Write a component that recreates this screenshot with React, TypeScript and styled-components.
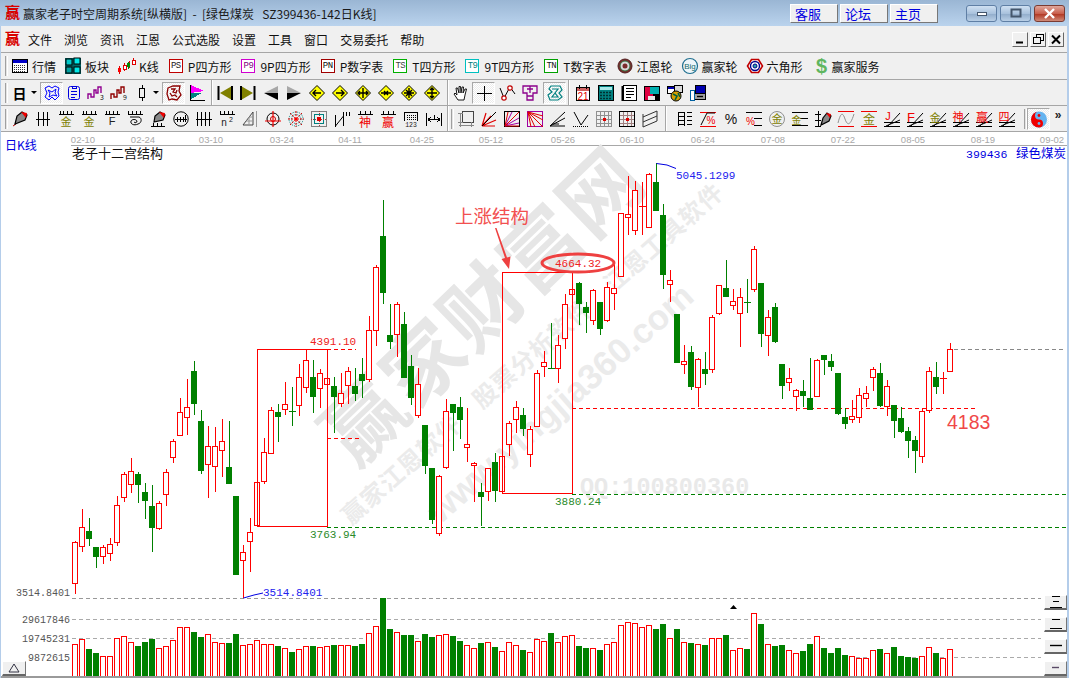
import React from 'react';
import styled, { createGlobalStyle } from 'styled-components';

const CJK = `"Noto Sans CJK SC", "Liberation Sans", sans-serif`;
const MONO = `"Liberation Mono", "Noto Sans CJK SC", monospace`;

const GlobalStyle = createGlobalStyle`
  html, body { margin: 0; padding: 0; background: #fff; overflow: hidden; }
  * { box-sizing: border-box; }
`;

const Window = styled.div`
  width: 1069px;
  height: 678px;
  display: flex;
  flex-direction: column;
  font-family: ${CJK};
  font-size: 12px;
  color: #111;
  background: #f0f0f0;
  border-left: 1px solid #b4cdea;
  border-right: 2px solid #b4cdea;
`;

const TitleBar = styled.div`
  height: 26px;
  margin: 0 -2px 0 -1px;
  padding: 0 4px 0 5px;
  display: flex;
  align-items: center;
  background: linear-gradient(#9ab6d4, #bad3ed);
  flex: none;
`;
const AppLogo = styled.span`
  width: 16px;
  font: bold 15px/16px "Liberation Serif", "Noto Sans CJK SC", serif;
  color: #d80000;
  margin-right: 2px;
`;
const TitleText = styled.span`
  flex: 1;
  white-space: pre;
  color: #1a1a1a;
`;
const LinkButton = styled.div`
  width: 48px;
  height: 19px;
  margin-right: 2px;
  padding-left: 4px;
  background: #f0f0f0;
  border: 1px solid;
  border-color: #fff #777 #777 #fff;
  color: #0000e0;
  font-size: 13px;
  line-height: 17px;
`;
const CaptionGroup = styled.div`
  display: flex;
  gap: 3px;
  margin-left: 26px;
`;
const CaptionButton = styled.div<{ $close?: boolean }>`
  width: 31px;
  height: 17px;
  border: 1px solid ${p => (p.$close ? '#7a3b32' : '#5f7fa5')};
  border-radius: 3px;
  background: ${p =>
    p.$close
      ? 'linear-gradient(#e0a79c, #c8604e 50%, #b23a26 55%, #d08a78)'
      : 'linear-gradient(#cfe0f2, #a9c2dd 50%, #93aecc 55%, #b9cfe6)'};
  display: flex;
  align-items: center;
  justify-content: center;
`;

const MenuBar = styled.div`
  height: 27px;
  padding-left: 4px;
  display: flex;
  align-items: center;
  flex: none;
  border-bottom: 1px solid #a6a6a6;
`;
const MenuLogo = styled(AppLogo)`
  margin-right: 2px;
  width: 15px;
`;
const MenuItem = styled.span`
  padding: 0 6px;
  color: #111;
`;
const MdiGroup = styled.div`
  margin-left: auto;
  margin-right: 3px;
  display: flex;
  gap: 2px;
`;
const MdiButton = styled.div`
  width: 16px;
  height: 15px;
  background: #f0f0f0;
  border: 1px solid;
  border-color: #fff #666 #666 #fff;
  display: flex;
  align-items: center;
  justify-content: center;
`;

const Toolbar = styled.div<{ $h: number }>`
  height: ${p => p.$h}px;
  flex: none;
  display: flex;
  align-items: center;
  padding-left: 4px;
  overflow: hidden;
  border-bottom: 1px solid #a6a6a6;
`;
const Grip = styled.div`
  width: 3px;
  height: 20px;
  flex: none;
  border-left: 1px solid #a0a0a0;
  border-right: 1px solid #fff;
  background: #e4e4e4;
`;
const Divider = styled.div`
  width: 2px;
  align-self: stretch;
  flex: none;
  border-left: 1px solid #a6a6a6;
  border-right: 1px solid #fff;
`;
const Gap = styled.div<{ $w: number }>`
  width: ${p => p.$w}px;
  flex: none;
`;
const Tool = styled.div<{ $w?: number; $active?: boolean }>`
  width: ${p => p.$w ?? 23}px;
  height: 22px;
  flex: none;
  display: flex;
  align-items: center;
  justify-content: center;
  ${p =>
    p.$active
      ? `background: repeating-conic-gradient(#fff 0 25%, #ececec 0 50%) 0 0 / 2px 2px;
         border: 1px solid; border-color: #a8a8a8 #fff #fff #a8a8a8;`
      : ''}
`;
const Caret = styled.div`
  width: 0;
  height: 0;
  border-left: 3px solid transparent;
  border-right: 3px solid transparent;
  border-top: 3px solid #000;
`;
const DayMark = styled.span`
  font-size: 14px;
  font-weight: 700;
  color: #000;
`;
const More = styled.span`
  font: bold 12px/10px "Liberation Sans", sans-serif;
  color: #222;
  margin-bottom: 8px;
`;

const Item = styled.div<{ $gap?: number; $end?: number }>`
  display: flex;
  align-items: center;
  gap: ${p => p.$gap ?? 4}px;
  margin-right: ${p => p.$end ?? 9}px;
  white-space: nowrap;
`;
const LetterBox = styled.div<{ $border: string; $ink: string }>`
  width: 14px;
  height: 14px;
  border: 1px solid ${p => p.$border};
  color: ${p => p.$ink};
  background: #fff;
  font: 9px/12px ${MONO};
  text-align: center;
  letter-spacing: -0.6px;
`;

const ChartPane = styled.div`
  position: relative;
  flex: 1;
  background: #fff;
  border-bottom: 2px solid #9a9a9a;
`;
const ChartSvg = styled.svg`
  display: block;
  width: 1066px;
  height: 544px;
`;
const ChartText = styled.text<{ $c: string; $s?: number; $f?: string; $b?: boolean }>`
  fill: ${p => p.$c};
  font-size: ${p => p.$s ?? 11}px;
  font-family: ${p => p.$f ?? MONO};
  font-weight: ${p => (p.$b ? 700 : 400)};
`;
const SideButtons = styled.div`
  position: absolute;
  right: 0;
  bottom: 0;
  display: flex;
  flex-direction: column;
  gap: 7px;
`;
const BevelButton = styled.div`
  width: 23px;
  height: 15px;
  background: #f0f0f0;
  border: 1px solid;
  border-color: #fff #777 #666 #fff;
  border-bottom-width: 2px;
  display: flex;
  align-items: center;
  justify-content: center;
`;
const ToggleButton = styled(BevelButton)`
  position: absolute;
  left: 1px;
  bottom: 0;
  width: 24px;
`;

const Icon = styled.svg`
  display: block;
  overflow: visible;
  fill: none;
  stroke: #000;
  stroke-width: 1;
  flex: none;
`;
const IconText = styled.text<{ $c: string; $s?: number; $f?: string }>`
  fill: ${p => p.$c};
  stroke: none;
  font-size: ${p => p.$s ?? 10}px;
  font-family: ${p => p.$f ?? CJK};
  text-anchor: middle;
`;

const Ticks = ({ xs = [3, 6, 9, 12] }: { xs?: number[] }) => (
  <path shapeRendering="crispEdges" d={`M0.5 3.5H15.5 ${xs.map(x => `M${x}.5 0V3`).join(' ')}`} />
);
const Fan = () => (
  <path d="M0 15.5H16M0 11.5H16M2 15L16 9M4 15L16 2" />
);
const Diamond = ({ d }: { d: string }) => (
  <>
    <path fill="#ffff00" d="M8 0.5L15.5 8L8 15.5L0.5 8Z" />
    <path strokeWidth="1.4" d={d} />
  </>
);

const icons: Record<string, React.ReactNode> = {
  table: (
    <>
      <rect x="0.5" y="1.5" width="15" height="13" fill="#fff" />
      <rect x="1" y="2" width="14" height="3" fill="#0000c8" stroke="none" />
      <path stroke="#333" strokeDasharray="1 1" shapeRendering="crispEdges" d="M2 7.5H14M2 9.5H14M2 11.5H14M2 13.5H14" />
    </>
  ),
  blocks: (
    <>
      <rect x="0" y="0" width="16" height="16" fill="#006666" stroke="none" />
      <rect x="1" y="1" width="6" height="6" fill="#00c8c8" stroke="#000" />
      <rect x="9" y="0" width="6" height="6" fill="#00e8e8" stroke="#000" />
      <rect x="1" y="9" width="6" height="6" fill="#00a0a0" stroke="#000" />
      <rect x="9" y="9" width="6" height="6" fill="#00e8e8" stroke="#000" />
    </>
  ),
  candles: (
    <g shapeRendering="crispEdges">
      <path stroke="#e00000" d="M1.5 8V16M6.5 5V13M11.5 3V10M15.5 0V7" />
      <rect x="0" y="10" width="3" height="4" fill="#f00" stroke="none" />
      <rect x="5" y="7" width="3" height="4" fill="#fff" stroke="#e00000" />
      <path stroke="#008000" d="M10.5 4V11" />
      <rect x="9" y="5" width="3" height="4" fill="#080" stroke="none" />
      <rect x="14" y="2" width="3" height="4" fill="#fff" stroke="#e00000" />
    </g>
  ),
  gannWheel: (
    <>
      <circle cx="8" cy="8" r="7" fill="#7a2a2a" stroke="#502020" />
      <circle cx="8" cy="8" r="5" fill="#d8d8d8" stroke="#2e6e3e" />
      <circle cx="8" cy="8" r="2.5" fill="#7a2a2a" stroke="none" />
    </>
  ),
  bigWheel: (
    <>
      <circle cx="8" cy="8" r="7.5" fill="#eef6fa" stroke="#1f6f8f" strokeWidth="1.2" />
      <IconText $c="#126a6a" $s={8} x="8" y="11" $f="Liberation Sans">Big</IconText>
    </>
  ),
  hexWheel: (
    <>
      <path fill="#fff" stroke="#c00000" strokeWidth="1.6" d="M4.5 1.5H11.5L15.5 8L11.5 14.5H4.5L0.5 8Z" />
      <circle cx="8" cy="8" r="4.5" fill="#fff" stroke="#00008c" strokeWidth="1.4" />
      <circle cx="8" cy="8" r="2" fill="#2ca8a8" stroke="#00008c" />
    </>
  ),
  wave: (
    <path stroke="#0000ff" d="M1 3L5 1L8 3L11 1L15 3L14 7L15 11L11 15L8 12L5 15L1 12L3 8ZM4 5L8 7L12 4L11 8L13 11L9 10L5 12L6 8Z" />
  ),
  notes: (
    <>
      <rect x="2.5" y="1.5" width="11" height="13" rx="2" stroke="#0000e0" />
      <path stroke="#0000e0" d="M6 1V3H10V1M5 6.5H11M5 9.5H11M5 12H9" shapeRendering="crispEdges" />
    </>
  ),
  wave3: (
    <>
      <path stroke="#900090" strokeWidth="1.4" d="M0 14V9H3V12H6V5H8V8H10V2H13V8" />
      <IconText $c="#111" $s={7} x="14" y="15">3</IconText>
    </>
  ),
  wave9: (
    <>
      <path stroke="#900000" strokeWidth="1.4" d="M0 14V9H3V12H6V5H8V8H10V2H13V8" />
      <IconText $c="#111" $s={7} x="14" y="15">9</IconText>
    </>
  ),
  candle: <path shapeRendering="crispEdges" d="M8.5 0V3M8.5 13V16M5.5 3.5H10.5V12.5H5.5Z" />,
  maze: (
    <path stroke="#8c0000" strokeWidth="1.3" d="M2 3L7 1L14 1L13 6L15 10L11 15L6 14L3 15L1 9ZM5 4L9 4L7 7L10 8L11 5M4 8L6 11L9 10L11 12" />
  ),
  flags: (
    <g shapeRendering="crispEdges">
      <path fill="#ff00ff" stroke="none" d="M2 0L15 6L2 8Z" />
      <path fill="#008080" stroke="none" d="M2 8L13 8L2 14Z" />
      <path stroke="#000" d="M1.5 0V15.5H16" />
    </g>
  ),
  first: (
    <>
      <path fill="#808000" stroke="none" d="M15 1V15L3 8Z" />
      <path strokeWidth="2" d="M1.5 1V15M15 1V15" />
    </>
  ),
  last: (
    <>
      <path fill="#808000" stroke="none" d="M1 1V15L13 8Z" />
      <path strokeWidth="2" d="M14.5 1V15M1 1V15" />
    </>
  ),
  prev: (
    <>
      <path fill="#a8a8a8" stroke="none" d="M15 1L15 8L1 8Z" />
      <path fill="#000" stroke="none" d="M15 15L15 8L1 8Z" />
    </>
  ),
  next: (
    <>
      <path fill="#a8a8a8" stroke="none" d="M1 1L1 8L15 8Z" />
      <path fill="#000" stroke="none" d="M1 15L1 8L15 8Z" />
    </>
  ),
  d1: <Diamond d="M12 8H4M7 5L4 8L7 11" />,
  d2: <Diamond d="M4 8H12M9 5L12 8L9 11" />,
  d3: <Diamond d="M3 8H13M5 6L3 8L5 10M11 6L13 8L11 10M8 3V13" />,
  d4: <Diamond d="M3 8H13M6 6L8 8L6 10M10 6L8 8L10 10" />,
  d5: <Diamond d="M3 8H13M8 3V13M5 5L11 11M11 5L5 11" />,
  d6: <Diamond d="M3 8H13M8 3V13M6 5L8 3L10 5M6 11L8 13L10 11" />,
  hand: (
    <path fill="#fff" strokeWidth="0.9" d="M5 15L1 9L2 8L4 10L3 3L4.5 3L6 8L6 1.5H7.5L8 8L9 2H10.5L10 8L12 4H13.5L12 10L11 15Z" />
  ),
  cross: <path shapeRendering="crispEdges" d="M8.5 1V16M1 8.5H16" />,
  vline: (
    <>
      <path d="M1 3L5 13L11 2L16 9" />
      <circle cx="5" cy="13" r="2.2" fill="#fff" stroke="#c00000" strokeWidth="1.2" />
      <circle cx="11" cy="3" r="2.2" fill="#fff" stroke="#c00000" strokeWidth="1.2" />
    </>
  ),
  purple: (
    <path stroke="#8c008c" strokeWidth="1.3" d="M1 1H15V8H11V15H5V8H1ZM5 4H11M8 1V8M5 11H11" />
  ),
  brain: (
    <path stroke="#008080" strokeWidth="1.2" d="M4 1H13L15 5L12 8L15 12L11 15H3L1 10L5 7L2 4ZM5 4L11 4L8 8L11 12H5L8 8" />
  ),
  calendar: (
    <>
      <rect x="1.5" y="2.5" width="13" height="13" fill="#fff" />
      <rect x="2" y="3" width="12" height="3" fill="#d06060" stroke="none" />
      <path d="M4.5 0V4M11.5 0V4" />
      <IconText $c="#e00000" $s={10} x="8" y="14.5" $f="Liberation Sans">21</IconText>
    </>
  ),
  calculator: (
    <>
      <rect x="0.5" y="0.5" width="15" height="15" fill="#008080" />
      <rect x="2" y="2" width="12" height="3" fill="#a8e8e8" stroke="none" />
      <path stroke="#003030" strokeWidth="1.6" strokeDasharray="2 1" d="M2 7.5H14M2 10.5H14M2 13.5H14" />
    </>
  ),
  ledger: (
    <>
      <rect x="2.5" y="0.5" width="13" height="15" fill="#fff" />
      <path d="M5 3.5H13M5 6.5H13M5 9.5H13M5 12.5H10" shapeRendering="crispEdges" />
      <path strokeWidth="2" d="M1.5 1V16" />
    </>
  ),
  floppy: (
    <>
      <path fill="#000" stroke="none" d="M0 1H16V16H0Z" />
      <rect x="1" y="2" width="8" height="13" fill="#e00040" stroke="none" />
      <path fill="#00b0b0" stroke="none" d="M6 2H15V9H6Z" />
      <rect x="4" y="11" width="7" height="4" fill="#e8e8e8" stroke="none" />
    </>
  ),
  globe: (
    <>
      <rect x="0.5" y="1.5" width="9" height="7" fill="#fff" />
      <rect x="1" y="2" width="8" height="2" fill="#0000b0" stroke="none" />
      <rect x="7.5" y="0.5" width="8" height="7" fill="#d8d8d8" />
      <circle cx="9" cy="11" r="5" fill="#d8a000" />
      <path stroke="#006040" strokeWidth="1.6" d="M6 9L10 11L8 15M11 8L13 12" />
    </>
  ),
  printer: (
    <>
      <rect x="5.5" y="0.5" width="10" height="8" fill="#0000b0" />
      <rect x="1.5" y="8.5" width="14" height="6" fill="#a0a0a0" />
      <rect x="0.5" y="5.5" width="4" height="10" fill="#fff" stroke="#0060a0" />
      <path strokeWidth="1.4" d="M7 11.5H13" />
    </>
  ),
  pencil: (
    <>
      <path stroke="#c00000" d="M1 15L4 13" />
      <path fill="#888" strokeWidth="1.2" d="M3 13L5 5L10 1L15 4L13 9Z" />
      <path fill="#f00000" stroke="none" d="M9 1L15 2L14 7Z" />
    </>
  ),
  hash3: <path shapeRendering="crispEdges" d="M3.5 1V15M8.5 1V15M12.5 1V15M1 8.5H15" />,
  jin1: (
    <>
      <Ticks xs={[2, 5, 9, 13]} />
      <IconText $c="#808000" $s={11} x="8" y="15">金</IconText>
    </>
  ),
  jin2: (
    <>
      <Ticks xs={[2, 5, 10, 14]} />
      <IconText $c="#808000" $s={11} x="8" y="15">金</IconText>
    </>
  ),
  fTicks: (
    <>
      <Ticks xs={[2, 5, 9, 13]} />
      <IconText $c="#222" $s={11} x="8" y="14" $f="Liberation Sans">F</IconText>
    </>
  ),
  spiral: (
    <>
      <Ticks xs={[1, 5, 9, 13]} />
      <path d="M3 6H12C15 7 15 12 11 13C7 15 3 13 4 10C5 8 9 8 10 10C10 12 8 12 7 11" />
    </>
  ),
  pencilRule: (
    <>
      <path shapeRendering="crispEdges" d="M1 15.5H15M3.5 12V16M7.5 12V16M11.5 12V16" />
      <path fill="#888" strokeWidth="1.2" d="M4 11L5 5L10 1L15 4L13 9Z" />
      <path fill="#f00000" stroke="none" d="M9 1L15 2L14 7Z" />
    </>
  ),
  circleRule: (
    <>
      <circle cx="8" cy="8" r="7.2" />
      <path shapeRendering="crispEdges" d="M2 8.5H14M4.5 6V11M7.5 6V11M10.5 6V11M12.5 4V11" />
    </>
  ),
  hash4: <path shapeRendering="crispEdges" d="M1.5 1V15M5.5 1V15M9.5 1V15M13.5 1V15M0 8.5H16" />,
  n2: (
    <>
      <Ticks xs={[1, 5, 9, 13]} />
      <IconText $c="#222" $s={10} x="5" y="15" $f="Liberation Sans">n</IconText>
      <IconText $c="#222" $s={7} x="12" y="11" $f="Liberation Sans">2</IconText>
    </>
  ),
  triangle: (
    <>
      <path d="M1 14L11 1V14Z" stroke="#444" />
      <path stroke="#999" d="M14.5 0V16M4 10H11M7 6H11M7 6V14" />
    </>
  ),
  target: (
    <>
      <circle cx="8" cy="8" r="6" />
      <circle cx="8" cy="8" r="2.5" stroke="#c00000" />
      <path stroke="#f00000" strokeWidth="1.2" d="M8 0V16M0 10H16" />
    </>
  ),
  web: (
    <>
      <circle cx="8" cy="8" r="7" stroke="#008080" strokeDasharray="1 1" />
      <circle cx="8" cy="8" r="4.5" stroke="#008080" strokeDasharray="1 1" />
      <path stroke="#e00000" strokeDasharray="2 1" d="M0 8H16M8 0V16M2 2L14 14M14 2L2 14" />
      <circle cx="8" cy="8" r="1.6" fill="#f00" stroke="none" />
    </>
  ),
  webSquare: (
    <g shapeRendering="crispEdges">
      <rect x="0.5" y="0.5" width="15" height="15" stroke="#808080" />
      <rect x="3.5" y="3.5" width="9" height="9" stroke="#008080" />
      <path stroke="#a04040" strokeDasharray="1 1" d="M0 8.5H16M8.5 0V16" />
      <rect x="6" y="6" width="4" height="4" fill="#e00000" stroke="none" />
    </g>
  ),
  nQuote: <path d="M1.5 4V16M1.5 15L9.5 5M9.5 1V15M12.5 1V5M15.5 1V5" />,
  shen: (
    <>
      <Ticks xs={[3, 8, 13]} />
      <IconText $c="#f00000" $s={12} x="8" y="15.5">神</IconText>
    </>
  ),
  ying: (
    <>
      <Ticks xs={[3, 8, 13]} />
      <IconText $c="#f00000" $s={12} x="8" y="15.5">赢</IconText>
    </>
  ),
  ruler: (
    <>
      <path shapeRendering="crispEdges" d="M1.5 1V10M1 1.5H15M14.5 1V10" />
      <path shapeRendering="crispEdges" strokeDasharray="1 1" d="M4 4.5H13M4 6.5H13M4 8.5H13" />
      <IconText $c="#222" $s={6.5} x="8" y="15.5" $f="Liberation Mono">123</IconText>
    </>
  ),
  measure: <path shapeRendering="crispEdges" d="M0.5 2V15M15.5 2V15M2 8.5H14M2 8.5L5 6M2 8.5L5 11M14 8.5L11 6M14 8.5L11 11M8.5 4V9" />,
  squareLegs: (
    <g shapeRendering="crispEdges" stroke="#444">
      <rect x="4.5" y="0.5" width="11" height="11" strokeWidth="1" />
      <path stroke="#888" d="M0 2.5H5M0 11.5H5M2.5 2V16M1 14.5H16M13.5 11V16" />
    </g>
  ),
  fanRed: (
    <>
      <path stroke="#e00000" strokeWidth="1.2" d="M1 15L5 2M1 15L10 5M1 15L15 9M1 15H14" />
      <path d="M1 15L15 1" />
    </>
  ),
  squareFan: (
    <>
      <rect x="0.5" y="0.5" width="15" height="15" />
      <path stroke="#a000a0" d="M1 15L8 1M1 15L15 7M1 15L15 12" />
      <path stroke="#e00000" d="M1 15L4 1M1 15L15 1M1 15L15 15" />
    </>
  ),
  squareFan2: (
    <>
      <rect x="0.5" y="0.5" width="15" height="15" stroke="#a000a0" />
      <path stroke="#e00000" d="M1 1L4 16M1 1L8 16M1 1L16 9M1 1L16 5M1 1L16 16" />
    </>
  ),
  fanBlack: <path d="M0 15L15 1M0 15L15 7M0 15H15M3 13L9 13" />,
  vDots: (
    <>
      <path d="M1 1L8 14L15 4" />
      <path strokeDasharray="1 1" d="M0 15.5H16" />
    </>
  ),
  gridRed: (
    <g shapeRendering="crispEdges">
      <path stroke="#909090" d="M0.5 0V16M4.5 0V16M8.5 0V16M12.5 0V16M15.5 0V16M0 0.5H16M0 4.5H16M0 8.5H16M0 12.5H16M0 15.5H16" />
      <rect x="7" y="7" width="3" height="3" fill="#e00000" stroke="none" />
    </g>
  ),
  gridFrame: (
    <g shapeRendering="crispEdges">
      <path stroke="#a08080" d="M4.5 0V16M8.5 0V16M12.5 0V16M0 4.5H16M0 8.5H16M0 12.5H16" />
      <path d="M0.5 0V16M15.5 0V16M0 0.5H16M0 15.5H16" />
      <rect x="7" y="7" width="3" height="3" fill="#e00000" stroke="none" />
    </g>
  ),
  parallel: <path d="M1 6L15 0M1 11L15 5M1 16L15 10M1 3V16M15 0V10" stroke="#333" />,
  gridList: <path shapeRendering="crispEdges" d="M1.5 1V15M1 1.5H8M1 5.5H8M1 9.5H8M1 13.5H8M7.5 1V15M10 1.5H15M10 5.5H15M10 9.5H15M10 13.5H15" />,
  percentLine: (
    <>
      <path stroke="#f00000" shapeRendering="crispEdges" strokeWidth="1.2" d="M0 1.5H16M0 15.5H16" />
      <path d="M1 14L7 2H15" />
      <IconText $c="#f00000" $s={10} x="11" y="13" $f="Liberation Sans">%</IconText>
    </>
  ),
  percent: <IconText $c="#111" $s={14} x="8" y="13" $f="Liberation Sans">%</IconText>,
  percentEq: (
    <>
      <path shapeRendering="crispEdges" d="M0 1.5H16M8 7.5H16M8 14.5H16" />
      <IconText $c="#f00000" $s={10} x="4.5" y="14" $f="Liberation Sans">%</IconText>
    </>
  ),
  jinCircle: (
    <>
      <circle cx="8" cy="8" r="7.5" stroke="#909090" />
      <IconText $c="#808000" $s={11} x="8" y="12">金</IconText>
    </>
  ),
  jinEq: (
    <>
      <path shapeRendering="crispEdges" d="M0 1.5H16M8 7.5H16M8 14.5H16M0 14.5H8" />
      <IconText $c="#808000" $s={10} x="4.5" y="13">金</IconText>
    </>
  ),
  gannPencil: (
    <>
      <path shapeRendering="crispEdges" d="M3.5 0V16M0 3.5H6M0 9.5H6M0 15.5H6" />
      <path fill="#888" strokeWidth="1.2" d="M6 14L8 7L12 2L16 5L14 10Z" />
      <path fill="#f00000" stroke="none" d="M11 2L16 3L15 7Z" />
    </>
  ),
  waveRed: (
    <>
      <path stroke="#f00000" shapeRendering="crispEdges" d="M0 0.5H16M0 15.5H16" />
      <path stroke="#909090" d="M0 12C3 0 5 2 7 8S12 16 16 3" />
    </>
  ),
  jinRed: (
    <>
      <path stroke="#f00000" shapeRendering="crispEdges" d="M0 0.5H16M0 15.5H16" />
      <IconText $c="#808000" $s={12} x="8" y="13">金</IconText>
    </>
  ),
  fanJ: <><IconText $c="#f00000" $s={11} x="4" y="9" $f="Liberation Sans">J</IconText><Fan /></>,
  fanF: <><IconText $c="#f00000" $s={13} x="4" y="11" $f="Liberation Sans">F</IconText><Fan /></>,
  fanJin: <><Fan /><IconText $c="#808000" $s={11} x="5" y="11">金</IconText></>,
  fanShen: <><Fan /><IconText $c="#f00000" $s={11} x="5" y="10">神</IconText></>,
  fanYing: <><Fan /><IconText $c="#f00000" $s={12} x="6" y="11">赢</IconText></>,
  fanSi: <><Fan /><IconText $c="#f00000" $s={11} x="5" y="10">四</IconText></>,
  yinyang: (
    <>
      <circle cx="8" cy="8.5" r="8" fill="#66b4f0" stroke="none" />
      <path fill="#f00000" stroke="none" d="M8 0.5A8 8 0 0 0 8 16.5A4 4 0 0 0 8 8.5A4 4 0 0 1 8 0.5Z" />
      <circle cx="8" cy="4.5" r="1.4" fill="#f00000" stroke="none" />
      <circle cx="8" cy="12.5" r="1.4" fill="#66b4f0" stroke="none" />
    </>
  ),
};

const Glyph = ({ name }: { name: string }) => (
  <Icon width="16" height="16" viewBox="0 0 16 16">{icons[name]}</Icon>
);

const menus = ['文件', '浏览', '资讯', '江恩', '公式选股', '设置', '工具', '窗口', '交易委托', '帮助'];

const boxItems = [
  { code: 'PS', label: 'P四方形', border: '#c00000', ink: '#222' },
  { code: 'P9', label: '9P四方形', border: '#d000d0', ink: '#800080' },
  { code: 'PN', label: 'P数字表', border: '#a00000', ink: '#111' },
  { code: 'TS', label: 'T四方形', border: '#00b000', ink: '#444' },
  { code: 'T9', label: '9T四方形', border: '#00c0c0', ink: '#008080' },
  { code: 'TN', label: 'T数字表', border: '#00a000', ink: '#222' },
];

const navTools = ['first', 'last', 'prev', 'next', 'd1', 'd2', 'd3', 'd4', 'd5', 'd6'];
const drawToolsA = [
  'pencil', 'hash3', 'jin1', 'jin2', 'fTicks', 'spiral', 'pencilRule', 'circleRule', 'hash4', 'n2',
  'triangle', 'target', 'web', 'webSquare', 'nQuote', 'shen', 'ying', 'ruler', 'measure',
];
const drawToolsB = ['squareLegs', 'fanRed', 'squareFan', 'squareFan2', 'fanBlack', 'vDots', 'gridRed', 'gridFrame', 'parallel'];
const drawToolsC = [
  'gridList', 'percentLine', 'percent', 'percentEq', 'jinCircle', 'jinEq', 'gannPencil', 'waveRed', 'jinRed',
  'fanJ', 'fanF', 'fanJin', 'fanShen', 'fanYing', 'fanSi',
];
const officeTools = ['calendar', 'calculator', 'ledger', 'floppy', 'globe', 'printer'];

const dates: [string, number][] = [
  ['02-10', 83], ['02-24', 143], ['03-10', 211], ['03-24', 282], ['04-11', 350], ['04-25', 422], ['05-12', 491],
  ['05-26', 563], ['06-10', 632], ['06-24', 703], ['07-08', 773], ['07-22', 843], ['08-05', 913], ['08-19', 983], ['09-02', 1052],
];

// body top, body bottom, wick top, wick bottom, colour, volume bar top
type Bar = [number, number, number, number, 'r' | 'g', number];
const bars: Bar[] = [
  [542, 584, 541, 594, 'r', 644], [527, 547, 509, 552, 'r', 639], [531, 539, 518, 546, 'g', 649], [547, 557, 547, 568, 'g', 653],
  [547, 557, 545, 564, 'r', 656], [544, 554, 538, 561, 'r', 656], [505, 543, 496, 546, 'r', 638], [474, 498, 472, 502, 'r', 636],
  [471, 485, 458, 493, 'r', 642], [474, 485, 472, 503, 'g', 646], [492, 501, 483, 519, 'g', 642], [506, 528, 485, 552, 'g', 639],
  [503, 529, 501, 530, 'r', 648], [472, 495, 469, 506, 'r', 646], [441, 458, 439, 463, 'r', 640], [412, 436, 398, 436, 'r', 627],
  [407, 418, 379, 435, 'r', 627], [371, 404, 361, 415, 'g', 632], [421, 471, 410, 474, 'g', 637], [446, 465, 426, 498, 'r', 634],
  [446, 467, 427, 492, 'r', 642], [441, 451, 419, 477, 'r', 643], [467, 484, 421, 484, 'g', 643], [496, 575, 496, 575, 'g', 634],
  [552, 561, 545, 598, 'r', 645], [532, 542, 518, 572, 'r', 644], [482, 526, 482, 526, 'r', 640], [452, 482, 438, 484, 'r', 644],
  [410, 454, 407, 454, 'r', 644], [412, 417, 404, 442, 'g', 646], [404, 410, 382, 415, 'r', 648], [411, 412, 387, 426, 'g', 652],
  [377, 406, 364, 416, 'r', 649], [360, 388, 349, 393, 'r', 646], [377, 397, 360, 413, 'g', 646], [373, 389, 369, 408, 'r', 647],
  [378, 385, 372, 392, 'r', 646], [386, 397, 377, 433, 'g', 645], [393, 404, 373, 407, 'r', 645], [371, 386, 367, 404, 'r', 645],
  [386, 394, 368, 401, 'g', 646], [374, 381, 358, 398, 'g', 644], [330, 380, 316, 382, 'r', 633], [267, 331, 265, 346, 'r', 626],
  [236, 293, 200, 304, 'g', 598], [335, 342, 304, 349, 'g', 629], [304, 335, 302, 357, 'r', 632], [324, 378, 312, 378, 'g', 635],
  [366, 398, 355, 405, 'g', 635], [384, 416, 368, 418, 'r', 641], [425, 466, 425, 474, 'g', 634], [468, 520, 468, 524, 'g', 637],
  [476, 534, 475, 536, 'r', 635], [411, 468, 399, 469, 'r', 634], [404, 413, 404, 451, 'g', 636], [407, 420, 397, 439, 'g', 641],
  [444, 448, 408, 462, 'r', 645], [463, 466, 462, 502, 'r', 648], [492, 497, 483, 526, 'g', 643], [468, 492, 468, 501, 'r', 642],
  [462, 491, 453, 502, 'g', 647], [456, 492, 456, 492, 'r', 651], [423, 445, 421, 456, 'r', 642], [407, 420, 401, 433, 'r', 645],
  [415, 429, 408, 436, 'g', 650], [429, 455, 426, 467, 'r', 652], [373, 427, 370, 427, 'r', 639], [362, 367, 351, 377, 'r', 641],
  [368, 369, 323, 369, 'g', 633], [345, 369, 335, 383, 'r', 642], [304, 339, 294, 349, 'r', 636], [289, 295, 272, 295, 'r', 635],
  [283, 304, 282, 325, 'g', 646], [307, 313, 302, 333, 'g', 648], [290, 321, 289, 325, 'r', 648], [302, 329, 302, 335, 'g', 650],
  [287, 321, 282, 322, 'r', 644], [288, 294, 265, 310, 'r', 642], [213, 277, 213, 277, 'r', 625], [214, 218, 176, 235, 'r', 622],
  [190, 231, 181, 235, 'r', 623], [206, 207, 182, 235, 'r', 627], [174, 228, 173, 228, 'r', 625], [182, 211, 163, 211, 'g', 629],
  [215, 275, 204, 289, 'g', 624], [280, 285, 270, 302, 'r', 638], [314, 363, 314, 363, 'g', 629], [361, 365, 345, 374, 'r', 642],
  [352, 387, 346, 390, 'g', 643], [359, 388, 358, 407, 'r', 644], [369, 374, 352, 385, 'g', 645], [317, 370, 315, 373, 'r', 638],
  [285, 314, 285, 315, 'r', 638], [288, 297, 260, 297, 'g', 635], [301, 306, 289, 310, 'r', 650], [297, 314, 288, 347, 'r', 648],
  [302, 303, 279, 313, 'g', 649], [249, 290, 246, 292, 'r', 613], [283, 334, 283, 347, 'g', 624], [317, 336, 310, 356, 'r', 644],
  [307, 342, 303, 343, 'g', 646], [364, 386, 364, 399, 'g', 645], [378, 383, 368, 391, 'r', 650], [390, 397, 389, 411, 'r', 653],
  [391, 396, 380, 407, 'g', 651], [398, 410, 358, 410, 'g', 644], [360, 397, 359, 397, 'r', 636], [355, 360, 355, 375, 'g', 648],
  [361, 367, 354, 371, 'g', 653], [373, 414, 373, 415, 'g', 648], [417, 424, 408, 429, 'g', 655], [416, 420, 400, 423, 'r', 656],
  [395, 418, 388, 423, 'r', 658], [393, 399, 386, 407, 'r', 658], [369, 378, 367, 391, 'r', 650], [373, 406, 363, 407, 'g', 649],
  [386, 407, 380, 416, 'r', 653], [405, 421, 405, 438, 'g', 647], [418, 432, 407, 433, 'g', 656], [431, 441, 427, 458, 'g', 657],
  [440, 451, 436, 473, 'g', 658], [411, 457, 408, 463, 'r', 656], [371, 411, 367, 413, 'r', 647], [377, 387, 362, 394, 'g', 653],
  [378, 379, 372, 394, 'r', 658], [349, 372, 343, 372, 'r', 649],
];

const RED = '#ff0000';
const GREEN = '#008000';

const Candle = ({ bar, x }: { bar: Bar; x: number }) => {
  const [top, bottom, wickTop, wickBottom, tone] = bar;
  const ink = tone === 'r' ? RED : GREEN;
  const flat = bottom - top <= 1;
  return (
    <>
      <rect x={x} y={wickTop} width="1" height={wickBottom - wickTop} fill={ink} />
      {flat ? (
        <rect x={x - 3} y={top} width="7" height="1" fill={ink} />
      ) : tone === 'r' ? (
        <rect x={x - 2.5} y={top + 0.5} width="5" height={bottom - top - 1} fill="#fff" stroke={ink} />
      ) : (
        <rect x={x - 3} y={top} width="6" height={bottom - top} fill={ink} />
      )}
    </>
  );
};

const VolumeBar = ({ bar, x }: { bar: Bar; x: number }) =>
  bar[4] === 'r' ? (
    <rect x={x - 2.5} y={bar[5] + 0.5} width="5" height={676 - bar[5]} fill="#fff" stroke={RED} />
  ) : (
    <rect x={x - 3} y={bar[5]} width="6" height={676 - bar[5]} fill={GREEN} />
  );

const DashLine = ({ x1, x2, y, c }: { x1: number; x2: number; y: number; c: string }) => (
  <line x1={x1} x2={x2} y1={y} y2={y} stroke={c} strokeDasharray="4 3" shapeRendering="crispEdges" />
);

const Chart = () => (
  <ChartSvg viewBox="1 132 1066 544">
    <path d="M71 145.5H1067" stroke="#a8a8a8" shapeRendering="crispEdges" />
    {dates.map(([label, x]) => (
      <ChartText key={label} $c="#a8a8a8" $s={9.5} $f="Liberation Sans" x={x} y={143} textAnchor="middle">{label}</ChartText>
    ))}
    <ChartText $c="#0000e0" $s={12} $f={CJK} x={5} y={149.5}>日K线</ChartText>
    <ChartText $c="#111" $s={13} $f={CJK} x={72} y={158}>老子十二宫结构</ChartText>
    <ChartText $c="#0000e0" $s={11.5} x={966} y={158}>399436</ChartText>
    <ChartText $c="#0000e0" $s={12.5} $f={CJK} x={1016} y={158}>绿色煤炭</ChartText>

    <ChartText $c="#e6e6e6" $s={80} $b $f={CJK} dominantBaseline="central" letterSpacing="2" transform="translate(360,416) rotate(-44)" x={-40} y={0}>赢家财富网</ChartText>
    <ChartText $c="#ebebeb" $s={24} $b $f={CJK} dominantBaseline="central" letterSpacing="1" transform="translate(353,510) rotate(-41.5)" x={-12} y={0}>赢家江恩软件　股票分析软件　江恩工具软件</ChartText>
    <ChartText $c="#ebebeb" $s={35} $b $f="Liberation Sans" transform="translate(440,525) rotate(-41.4)" x={0} y={0}>www.yingjia360.com</ChartText>
    <ChartText $c="#e9e9e9" $s={23.5} $b $f="Liberation Mono" x={580} y={494}>QQ:100800360</ChartText>

    <DashLine x1={72} x2={1041} y={598.5} c="#999" />
    <DashLine x1={72} x2={1041} y={619.5} c="#aaa" />
    <DashLine x1={72} x2={1041} y={638.5} c="#aaa" />
    <DashLine x1={72} x2={1041} y={657.5} c="#aaa" />
    <DashLine x1={954} x2={1066} y={349.5} c="#888" />
    <DashLine x1={327} x2={1067} y={527.5} c={GREEN} />
    <DashLine x1={572} x2={1067} y={494.5} c={GREEN} />
    <DashLine x1={572} x2={975} y={408.5} c={RED} />
    <DashLine x1={327} x2={356} y={349.5} c={RED} />
    <DashLine x1={327} x2={361} y={438.5} c={RED} />
    <DashLine x1={572} x2={592} y={272.5} c={RED} />

    {bars.map((bar, i) => (
      <Candle key={i} bar={bar} x={75 + i * 7} />
    ))}
    {bars.map((bar, i) => (
      <VolumeBar key={i} bar={bar} x={75 + i * 7} />
    ))}

    <g fill="none" stroke={RED} shapeRendering="crispEdges">
      <rect x={257.5} y={349.5} width={70} height={177} />
      <rect x={502.5} y={272} width={70} height={221.5} />
    </g>

    <ChartText $c="#ee2222" x={310} y={345}>4391.10</ChartText>
    <ChartText $c="#2a8a2a" x={310} y={538}>3763.94</ChartText>
    <ChartText $c="#2a8a2a" x={555} y={505}>3880.24</ChartText>
    <ChartText $c="#2222ee" x={676} y={179}>5045.1299</ChartText>
    <ChartText $c="#2222ee" x={263} y={596}>3514.8401</ChartText>
    <ChartText $c="#555" $s={10} x={16} y={596}>3514.8401</ChartText>
    <ChartText $c="#555" $s={10} x={22} y={623}>29617846</ChartText>
    <ChartText $c="#555" $s={10} x={22} y={642}>19745231</ChartText>
    <ChartText $c="#555" $s={10} x={28} y={661}>9872615</ChartText>

    <path d="M656.5 163.5L667 165L676 168.5" fill="none" stroke="#0000e0" />
    <path d="M243.5 598L254 595L263 593" fill="none" stroke="#0000e0" />

    <ellipse cx={578} cy={263} rx={36} ry={9} fill="none" stroke="#ee4040" strokeWidth="3" />
    <ChartText $c="#ee2222" x={555} y={267}>4664.32</ChartText>
    <ChartText $c="#f25050" $s={18.5} $f={CJK} x={455} y={223}>上涨结构</ChartText>
    <path d="M495 228L505 258L501.5 259L509 269L510.5 256.5L507 257.5L496.5 228Z" fill="#ee4040" />
    <ChartText $c="#f04848" $s={19.5} $f="Liberation Sans" x={947} y={429}>4183</ChartText>

    <path d="M730 609L733.5 605L737 609Z" fill="#000" />
  </ChartSvg>
);

const App: React.FC = () => (
  <>
    <GlobalStyle />
    <Window>
      <TitleBar>
        <AppLogo>赢</AppLogo>
        <TitleText>赢家老子时空周期系统[纵横版]  -  [绿色煤炭   SZ399436-142日K线]</TitleText>
        <LinkButton>客服</LinkButton>
        <LinkButton>论坛</LinkButton>
        <LinkButton>主页</LinkButton>
        <CaptionGroup>
          <CaptionButton>
            <Icon width="14" height="7" viewBox="0 0 14 7"><rect x="2.5" y="2.5" width="9" height="3" fill="#fff" stroke="#44566c" /></Icon>
          </CaptionButton>
          <CaptionButton>
            <Icon width="12" height="10" viewBox="0 0 12 10"><rect x="1.5" y="1.5" width="9" height="7" fill="none" stroke="#44566c" strokeWidth="2" /></Icon>
          </CaptionButton>
          <CaptionButton $close>
            <Icon width="13" height="11" viewBox="0 0 13 11"><path d="M2 1L11 10M11 1L2 10" stroke="#fff" strokeWidth="2.4" /></Icon>
          </CaptionButton>
        </CaptionGroup>
      </TitleBar>

      <MenuBar>
        <MenuLogo>赢</MenuLogo>
        {menus.map(m => (
          <MenuItem key={m}>{m}</MenuItem>
        ))}
        <MdiGroup>
          <MdiButton>
            <Icon width="10" height="9" viewBox="0 0 10 9"><path d="M1 7.5H8" strokeWidth="2" /></Icon>
          </MdiButton>
          <MdiButton>
            <Icon width="11" height="10" viewBox="0 0 11 10"><path d="M3.5 2.5V0.5H10V6H7.5M0.5 3H7.5V9.5H0.5Z" shapeRendering="crispEdges" /></Icon>
          </MdiButton>
          <MdiButton>
            <Icon width="10" height="9" viewBox="0 0 10 9"><path d="M1 0.5L9 8.5M9 0.5L1 8.5" strokeWidth="2" /></Icon>
          </MdiButton>
        </MdiGroup>
      </MenuBar>

      <Toolbar $h={27}>
        <Grip />
        <Gap $w={4} />
        <Item><Glyph name="table" />行情</Item>
        <Item><Glyph name="blocks" />板块</Item>
        <Item $end={10} $gap={5}><Glyph name="candles" />K线</Item>
        {boxItems.map(b => (
          <Item key={b.code} $gap={5} $end={10}>
            <LetterBox $border={b.border} $ink={b.ink}>{b.code}</LetterBox>
            {b.label}
          </Item>
        ))}
        <Item><Glyph name="gannWheel" />江恩轮</Item>
        <Item><Glyph name="bigWheel" />赢家轮</Item>
        <Item $end={12}><Glyph name="hexWheel" />六角形</Item>
        <Item>
          <Icon width="13" height="18" viewBox="0 0 13 18">
            <IconText $c="#5fb65f" $s={20} x="6.5" y="16" $f="Liberation Sans" fontWeight="700">$</IconText>
          </Icon>
          赢家服务
        </Item>
      </Toolbar>

      <Toolbar $h={26}>
        <Grip />
        <Tool><DayMark>日</DayMark></Tool>
        <Tool $w={6}><Caret /></Tool>
        <Gap $w={3} />
        <Tool $active><Glyph name="wave" /></Tool>
        <Tool $w={22}><Glyph name="notes" /></Tool>
        <Tool $w={22}><Glyph name="wave3" /></Tool>
        <Tool><Glyph name="wave9" /></Tool>
        <Tool><Glyph name="candle" /></Tool>
        <Tool $w={6}><Caret /></Tool>
        <Gap $w={3} />
        <Tool $active><Glyph name="maze" /></Tool>
        <Tool><Glyph name="flags" /></Tool>
        <Gap $w={3} />
        <Divider />
        {navTools.map(t => (
          <Tool key={t}><Glyph name={t} /></Tool>
        ))}
        <Gap $w={4} />
        <Divider />
        <Tool><Glyph name="hand" /></Tool>
        <Tool $active><Glyph name="cross" /></Tool>
        <Tool $w={24}><Glyph name="vline" /></Tool>
        <Tool $w={21}><Glyph name="purple" /></Tool>
        <Gap $w={3} />
        <Tool $active><Glyph name="brain" /></Tool>
        <Gap $w={2} />
        <Divider />
        <Gap $w={1} />
        {officeTools.map(t => (
          <Tool key={t}><Glyph name={t} /></Tool>
        ))}
      </Toolbar>

      <Toolbar $h={26}>
        <Grip />
        {drawToolsA.map(t => (
          <Tool key={t}><Glyph name={t} /></Tool>
        ))}
        <Gap $w={2} />
        <Divider />
        <Gap $w={2} />
        <Grip />
        {drawToolsB.map(t => (
          <Tool key={t}><Glyph name={t} /></Tool>
        ))}
        <Gap $w={4} />
        <Divider />
        <Gap $w={6} />
        {drawToolsC.map(t => (
          <Tool key={t}><Glyph name={t} /></Tool>
        ))}
        <Gap $w={6} />
        <Grip />
        <Tool $active><Glyph name="yinyang" /></Tool>
        <Tool $w={16}><More>»</More></Tool>
      </Toolbar>

      <ChartPane>
        <Chart />
        <ToggleButton>
          <Icon width="12" height="10" viewBox="0 0 12 10"><path d="M6 1L11 9H1Z" stroke="#334" /></Icon>
        </ToggleButton>
        <SideButtons>
          <BevelButton>
            <Icon width="14" height="12" viewBox="0 0 14 12"><path d="M3 0.5H11M4 5.5H10M1 11.5H13" shapeRendering="crispEdges" /></Icon>
          </BevelButton>
          <BevelButton>
            <Icon width="14" height="10" viewBox="0 0 14 10"><path d="M3 0.5H11M1 9.5H13" shapeRendering="crispEdges" /></Icon>
          </BevelButton>
          <BevelButton>
            <Icon width="14" height="4" viewBox="0 0 14 4"><path d="M1 1.5H13" strokeWidth="1.4" /></Icon>
          </BevelButton>
          <BevelButton>
            <Icon width="10" height="4" viewBox="0 0 10 4"><path d="M1 1.5H8" stroke="#5a4a66" strokeWidth="1.4" /></Icon>
          </BevelButton>
        </SideButtons>
      </ChartPane>
    </Window>
  </>
);

export default App;
